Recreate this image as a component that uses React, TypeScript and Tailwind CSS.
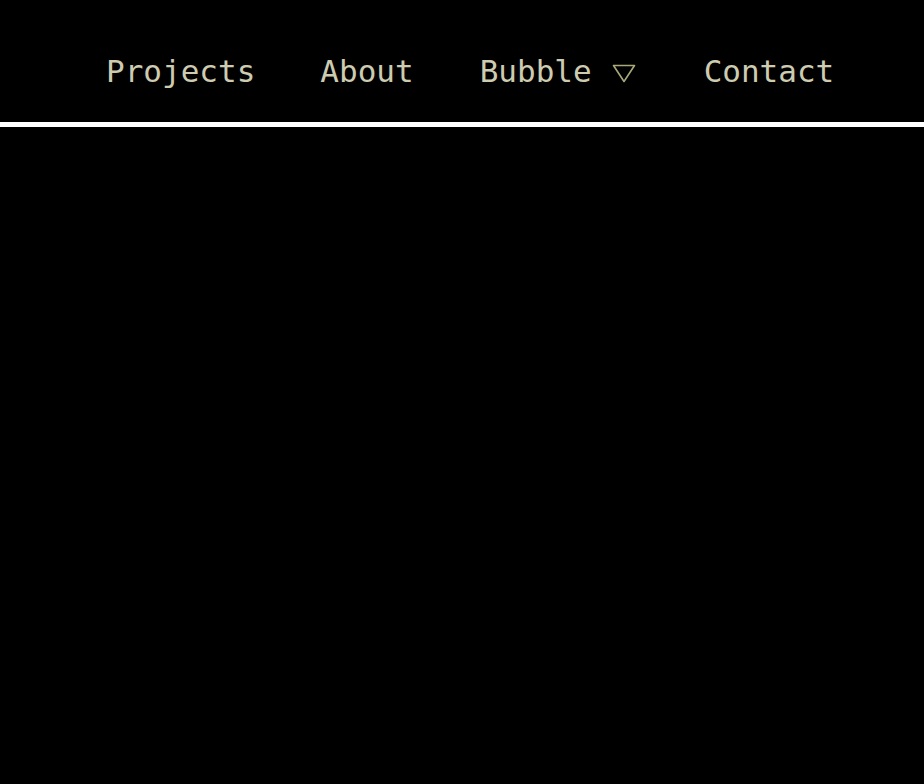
export default function App() {
  return (
    <div className="min-h-[784px] w-full bg-black" style={{ fontFamily: '"DejaVu Sans Mono", "Liberation Mono", monospace' }}>
      <nav className="flex h-[122px] items-center pl-[106px] pt-[20px] text-[31px] leading-[40px] text-[#cdcbb0]">
        <span>Projects</span>
        <span className="ml-[65px]">About</span>
        <span className="ml-[66px] flex items-center">
          Bubble
          <svg className="ml-[20px] mt-[5px]" width="24" height="19" viewBox="0 0 24 19">
            <path d="M1.5 1.5 L22.5 1.5 L12 17.5 Z" fill="none" stroke="#a8a878" strokeWidth="1.6" strokeLinejoin="round" />
          </svg>
        </span>
        <span className="ml-[68px]">Contact</span>
      </nav>
      <div className="h-[5px] bg-white" />
    </div>
  );
}
